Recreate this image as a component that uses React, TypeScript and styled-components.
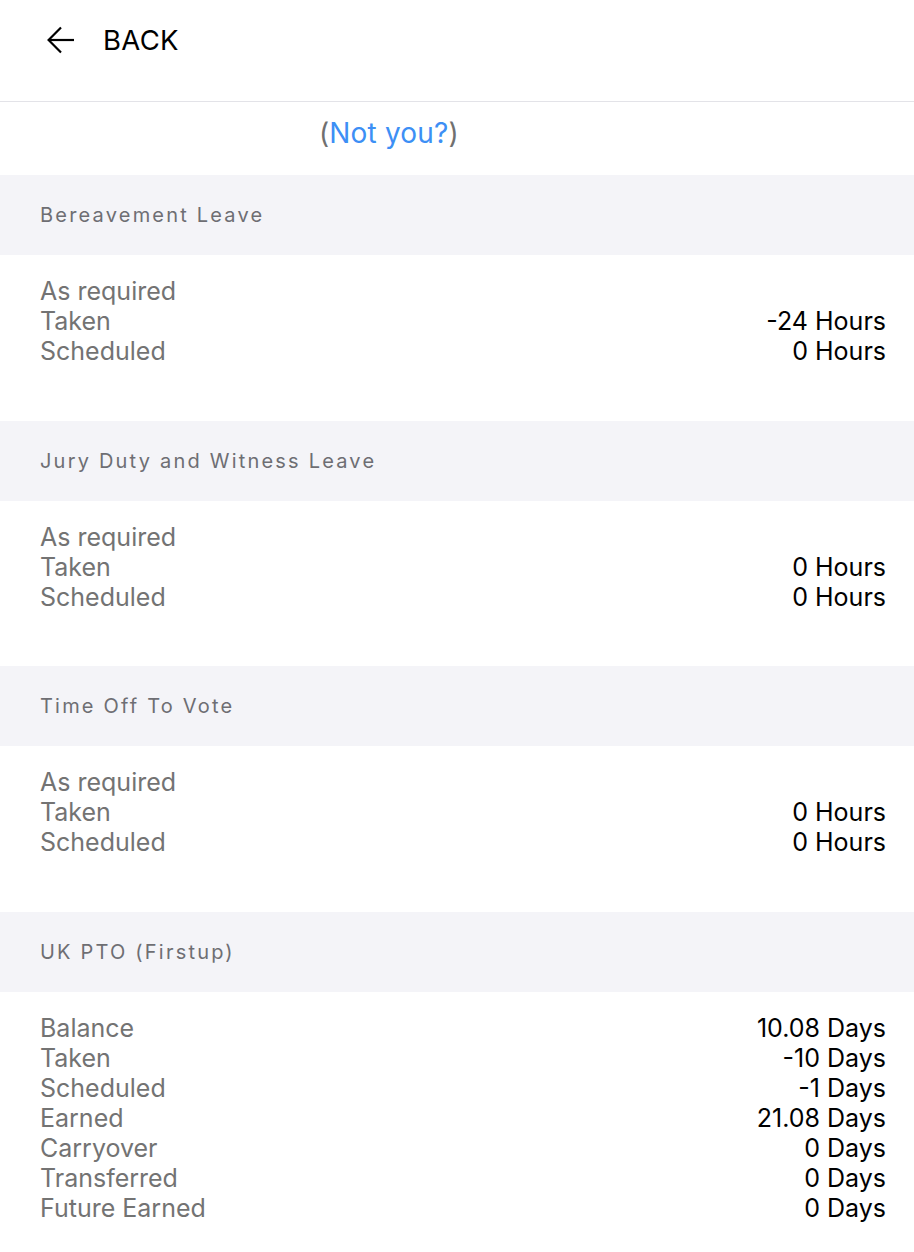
import React from "react";
import styled, { createGlobalStyle } from "styled-components";

const Global = createGlobalStyle`
  html, body { margin: 0; padding: 0; background: #ffffff; }
  body { font-family: Inter, "Noto Sans", "Liberation Sans", sans-serif; -webkit-font-smoothing: antialiased; }
`;

const Page = styled.div`
  width: 914px;
  background: #fff;
`;

const TopBar = styled.header`
  height: 102px;
  box-sizing: border-box;
  display: flex;
  align-items: center;
  gap: 28px;
  padding: 0 0 22px 47px;
  border-bottom: 1px solid #e3e3e8;
`;

const BackLabel = styled.span`
  font-size: 27.5px;
  color: #000;
  letter-spacing: 0.3px;
`;

const Identity = styled.div`
  height: 73px;
  box-sizing: border-box;
  padding: 14px 0 0 319px;
  font-size: 28px;
  line-height: 34px;
  color: #707070;
`;

const Link = styled.a`
  color: #3d8ff5;
  text-decoration: none;
  letter-spacing: 0.2px;
`;

const SectionHeader = styled.div`
  height: 80px;
  display: flex;
  align-items: center;
  padding-left: 40px;
  background: #f4f4f8;
  font-size: 20px;
  letter-spacing: 2.2px;
  color: #6e6e73;
`;

const SectionBody = styled.div`
  padding: 21px 28px 54.7px 40px;
`;

const Row = styled.div`
  display: flex;
  justify-content: space-between;
  line-height: 30px;
  font-size: 25px;
`;

const Label = styled.span`
  color: #737373;
`;

const Value = styled.span`
  color: #000;
`;

type Item = [string, string];
type Section = { title: string; rows: Item[] };

const sections: Section[] = [
  {
    title: "Bereavement Leave",
    rows: [["As required", ""], ["Taken", "-24 Hours"], ["Scheduled", "0 Hours"]],
  },
  {
    title: "Jury Duty and Witness Leave",
    rows: [["As required", ""], ["Taken", "0 Hours"], ["Scheduled", "0 Hours"]],
  },
  {
    title: "Time Off To Vote",
    rows: [["As required", ""], ["Taken", "0 Hours"], ["Scheduled", "0 Hours"]],
  },
  {
    title: "UK PTO (Firstup)",
    rows: [
      ["Balance", "10.08 Days"],
      ["Taken", "-10 Days"],
      ["Scheduled", "-1 Days"],
      ["Earned", "21.08 Days"],
      ["Carryover", "0 Days"],
      ["Transferred", "0 Days"],
      ["Future Earned", "0 Days"],
    ],
  },
];

const BackArrow = () => (
  <svg width="28" height="28" viewBox="0 0 28 28" fill="none" stroke="#000" strokeWidth="2.2" strokeLinecap="butt" strokeLinejoin="miter">
    <path d="M2 14 H27" />
    <path d="M14 1.5 L1.6 14 L14 26.5" />
  </svg>
);

export default function App() {
  return (
    <Page>
      <Global />
      <TopBar>
        <BackArrow />
        <BackLabel>BACK</BackLabel>
      </TopBar>
      <Identity>
        (<Link href="#">Not you?</Link>)
      </Identity>
      {sections.map((s) => (
        <section key={s.title}>
          <SectionHeader>{s.title}</SectionHeader>
          <SectionBody>
            {s.rows.map(([l, v]) => (
              <Row key={l}>
                <Label>{l}</Label>
                <Value>{v}</Value>
              </Row>
            ))}
          </SectionBody>
        </section>
      ))}
    </Page>
  );
}
